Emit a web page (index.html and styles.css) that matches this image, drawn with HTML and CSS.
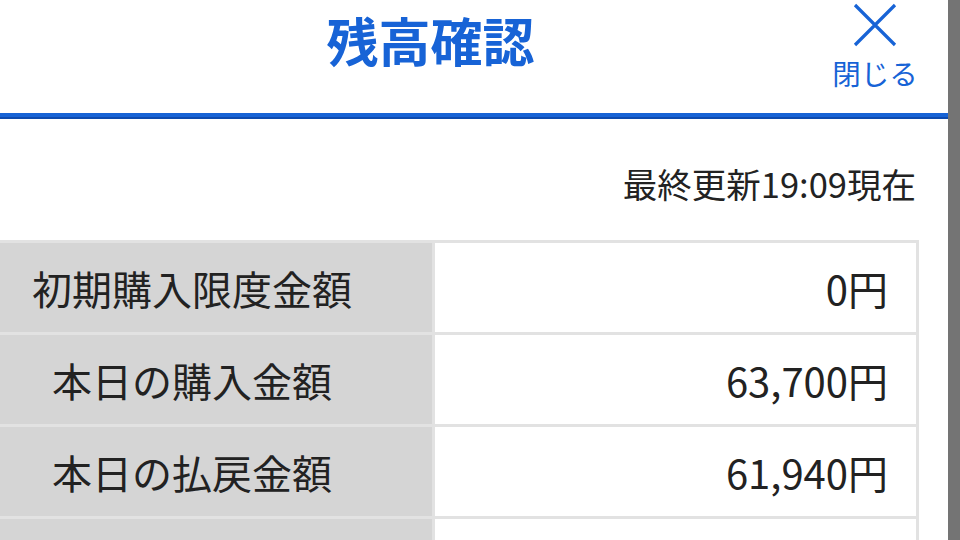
FILE: index.html
```html
<!DOCTYPE html>
<html lang="ja">
<head>
    <meta charset="UTF-8">
    <meta name="viewport" content="width=device-width, initial-scale=1.0">
    <title>残高確認</title>
    <link rel="stylesheet" href="styles.css">
</head>
<body>
    <div class="screen">
        <div class="page">
            <div class="header">
                <h1 class="title">残高確認</h1>
                <a href="#" class="close-button">
                    <svg class="close-icon" viewBox="0 0 44 44" width="44" height="44">
                        <path d="M2 2 L42 42 M42 2 L2 42" stroke="#1763d6" stroke-width="3.2" fill="none"/>
                    </svg>
                    <span class="close-label">閉じる</span>
                </a>
            </div>

            <p class="updated">最終更新19:09現在</p>

            <div class="balance-table">
                <div class="label-cell">初期購入限度金額</div>
                <div class="value-cell">0円</div>
                <div class="label-cell">本日の購入金額</div>
                <div class="value-cell">63,700円</div>
                <div class="label-cell">本日の払戻金額</div>
                <div class="value-cell">61,940円</div>
                <div class="label-cell">&nbsp;</div>
                <div class="value-cell">&nbsp;</div>
            </div>
        </div>
        <div class="scrollbar"></div>
    </div>
</body>
</html>
```
FILE: styles.css
```css
/* General Styles */
body {
    margin: 0;
    padding: 0;
    background-color: #fff;
    font-family: "Noto Sans CJK JP", "Noto Sans", sans-serif;
    color: #222;
    overflow: hidden;
}

.screen {
    display: flex;
    width: 960px;
    height: 540px;
    overflow: hidden;
}

.page {
    width: 948px;
    flex-shrink: 0;
}

.scrollbar {
    flex: 1;
    background-color: #747474;
}

/* Header */
.header {
    display: flex;
    align-items: flex-start;
    height: 113px;
    padding-right: 29px;
    border-bottom: 4px solid #1763d6;
    box-shadow: 0 2px 0 #0d4aae;
    box-sizing: content-box;
}

.title {
    flex: 1;
    margin: 0;
    padding: 6px 0 0 30px;
    text-align: center;
    color: #1763d6;
    font-size: 52px;
    font-weight: bold;
    line-height: 68px;
}

.close-button {
    display: flex;
    flex-direction: column;
    align-items: center;
    width: 88px;
    padding-top: 3px;
    text-decoration: none;
    color: #1763d6;
}

.close-icon {
    display: block;
}

.close-label {
    margin-top: 8px;
    font-size: 28.5px;
    line-height: 36px;
}

/* Last update */
.updated {
    margin: 46px 0 0 0;
    padding-right: 32px;
    text-align: right;
    font-size: 34.5px;
    line-height: 40px;
}

/* Balance table */
.balance-table {
    display: grid;
    grid-template-columns: 480px 1fr;
    grid-auto-rows: 89px;
    gap: 3px;
    width: 970px;
    margin: 37px 0 0 -51px;
    border: 3px solid #e2e2e2;
    background-color: #e2e2e2;
    box-sizing: border-box;
}

.label-cell, .value-cell {
    display: flex;
    align-items: center;
    font-size: 40px;
}

.label-cell {
    justify-content: center;
    background-color: #d5d5d5;
}

.value-cell {
    justify-content: flex-end;
    padding-right: 28px;
    background-color: #fff;
}
```
